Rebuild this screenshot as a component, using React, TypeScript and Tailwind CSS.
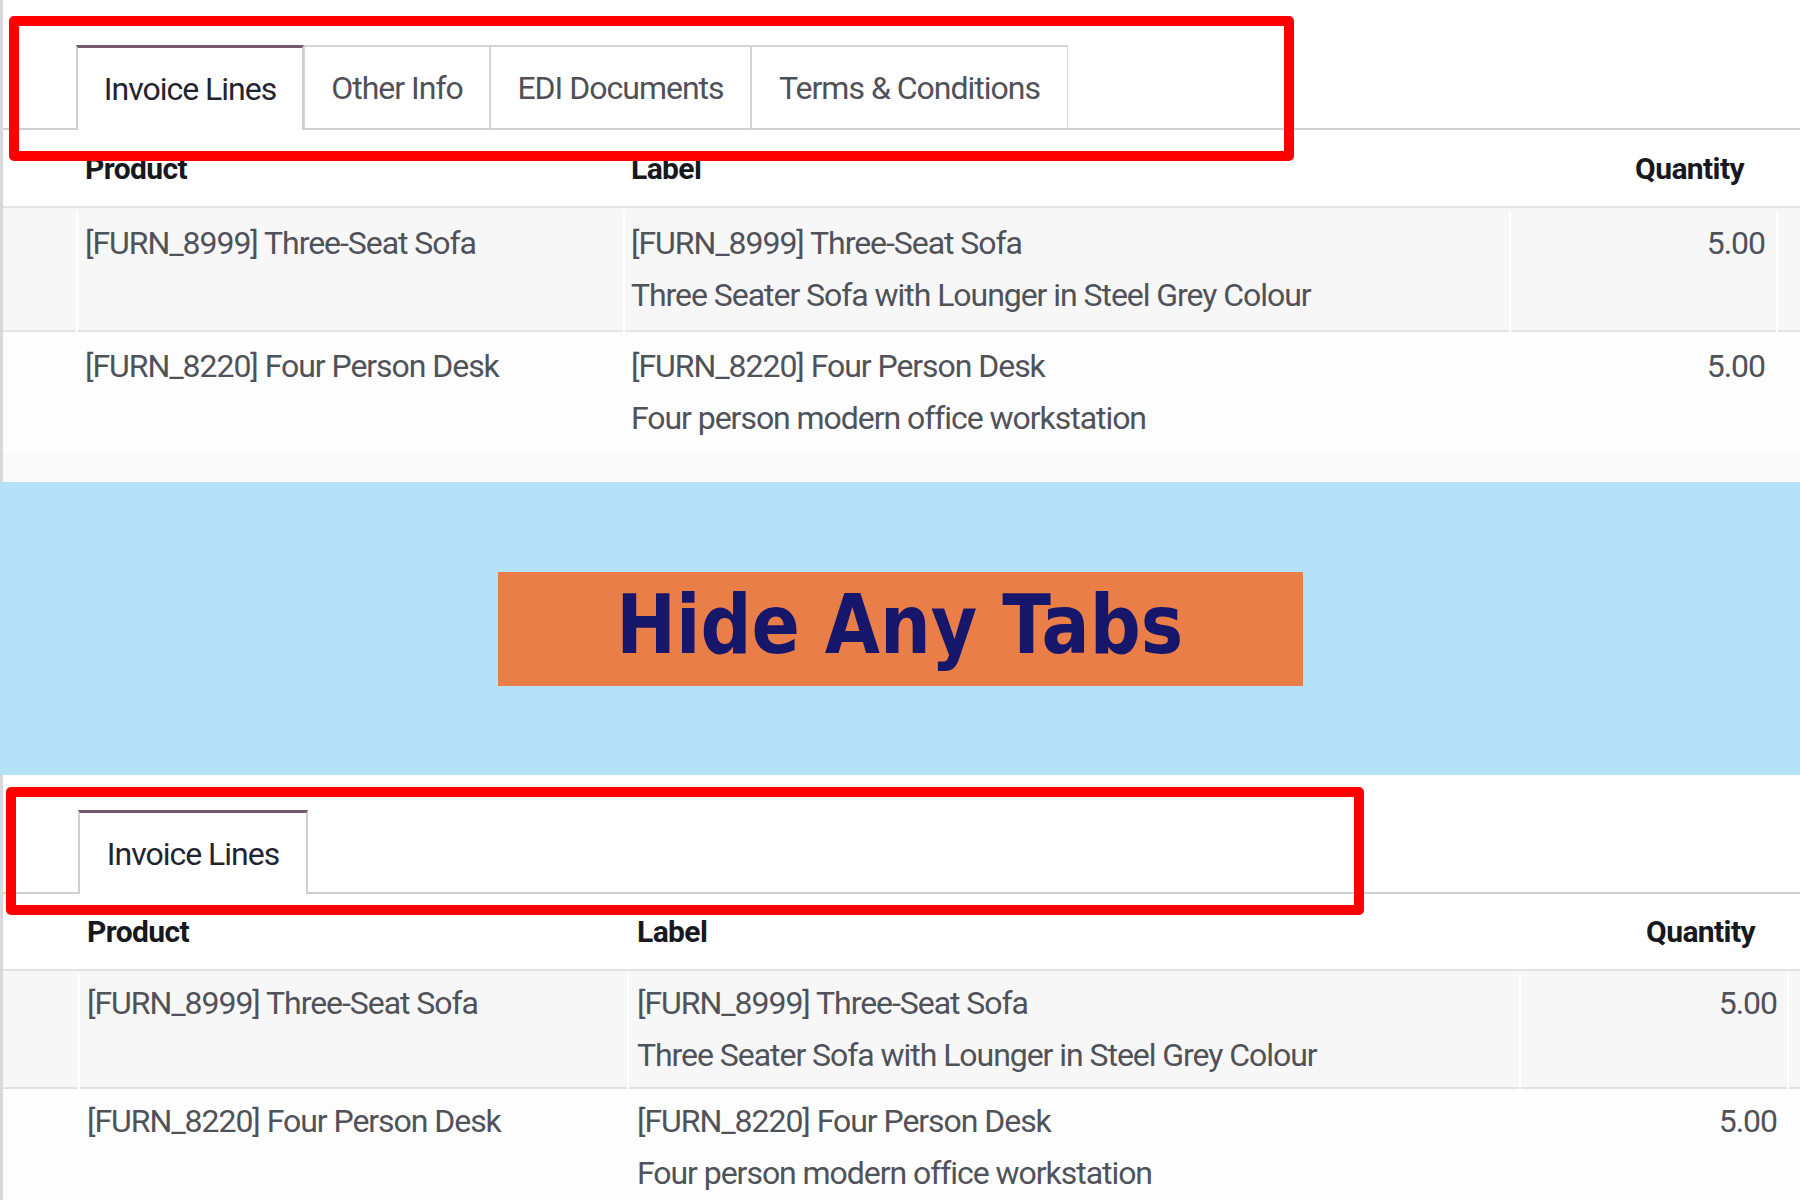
import React from "react";

type Tab = { label: string; width: string; active?: boolean };

type Line = {
  product: string;
  label: string;
  description: string;
  quantity: string;
};

const LINES: Line[] = [
  {
    product: "[FURN_8999] Three-Seat Sofa",
    label: "[FURN_8999] Three-Seat Sofa",
    description: "Three Seater Sofa with Lounger in Steel Grey Colour",
    quantity: "5.00",
  },
  {
    product: "[FURN_8220] Four Person Desk",
    label: "[FURN_8220] Four Person Desk",
    description: "Four person modern office workstation",
    quantity: "5.00",
  },
];

const ALL_TABS: Tab[] = [
  { label: "Invoice Lines", width: "w-[228px]", active: true },
  { label: "Other Info", width: "w-[186px]" },
  { label: "EDI Documents", width: "w-[261px]" },
  { label: "Terms & Conditions", width: "w-[317px]" },
];

const ONLY_TAB: Tab[] = [{ label: "Invoice Lines", width: "w-[230px]", active: true }];

const font = "font-['Roboto','Liberation_Sans',sans-serif]";

// tab header row of the form notebook
const TabStrip = ({ tabs, top, left, tabH }: { tabs: Tab[]; top: string; left: string; tabH: string }) => (
  <div className={`flex ${top} ${left} border-b-2 border-[#cfd0d4] bg-white`}>
    {tabs.map((tab) => (
      <div
        key={tab.label}
        className={`${tab.width} ${tabH} -mb-[2px] flex items-center justify-center text-[32px] tracking-[-1px] ${
          tab.active
            ? "bg-white border-x-2 border-t-[3px] border-x-[#cfd0d4] border-t-[#75586e] text-[#1f2430]"
            : "border-x border-t-2 border-[#d3d4d8] border-b-2 border-b-[#cfd0d4] text-[#4f5159]"
        }`}
      >
        {tab.label}
      </div>
    ))}
  </div>
);

type Cols = {
  grid: string;
  productPad: string;
  labelPad: string;
  qtyPad: string;
  headPad: string;
};

const LinesTable = ({
  cols,
  headH,
  rowHeights,
  rowPads,
}: {
  cols: Cols;
  headH: string;
  rowHeights: string[];
  rowPads: string[];
}) => (
  <div className="bg-white">
    {/* column headers */}
    <div
      className={`grid ${cols.grid} gap-x-[2px] ${headH} items-center border-b-2 border-[#e4e4e7] shadow-[0_2px_3px_rgba(0,0,0,0.05)] text-[30px] font-bold tracking-[-0.6px] text-[#17191f]`}
    >
      <div />
      <div className={cols.productPad}>Product</div>
      <div className={cols.labelPad}>Label</div>
      <div className={`${cols.headPad} text-right`}>Quantity</div>
      <div />
    </div>

    {LINES.map((line, i) => {
      const bg = i === 0 ? "bg-[#f7f7f8]" : "bg-[#fdfdfd]";
      const cell = `${bg} ${rowHeights[i]} ${i === 0 ? "border-b-2 border-[#e3e4e7]" : ""}`;
      return (
        <div
          key={line.product}
          className={`grid ${cols.grid} gap-x-[2px] text-[32px] leading-[40px] tracking-[-1.05px] text-[#50525a]`}
        >
          <div className={cell} />
          <div className={`${cell} ${rowPads[i]} ${cols.productPad}`}>{line.product}</div>
          <div className={`${cell} ${rowPads[i]} ${cols.labelPad}`}>
            <div>{line.label}</div>
            <div className="mt-[12px]">{line.description}</div>
          </div>
          <div className={`${cell} ${rowPads[i]} ${cols.qtyPad} text-right`}>{line.quantity}</div>
          <div className={cell} />
        </div>
      );
    })}
  </div>
);

const RedBox = ({ pos }: { pos: string }) => (
  <div className={`absolute ${pos} border-[10px] border-[#ff0000] rounded-[5px] pointer-events-none`} />
);

export default function App() {
  return (
    <div className={`w-[1800px] h-[1200px] overflow-hidden bg-white ${font}`}>
      {/* before: every tab visible */}
      <section className="relative h-[482px] border-l-[3px] border-[#d9d9dd] bg-[#f9f9f9]">
        <TabStrip tabs={ALL_TABS} top="pt-[45px]" left="pl-[73px]" tabH="h-[85px]" />
        <LinesTable
          cols={{
            grid: "grid-cols-[73px_545px_884px_265px_1fr]",
            productPad: "pl-[7px]",
            labelPad: "pl-[6px]",
            qtyPad: "pr-[11px]",
            headPad: "pr-[32px]",
          }}
          headH="h-[78px]"
          rowHeights={["h-[124px]", "h-[121px]"]}
          rowPads={["pt-[15px]", "pt-[14px]"]}
        />
        <RedBox pos="left-[6px] top-[16px] w-[1285px] h-[145px]" />
      </section>

      {/* banner */}
      <div className="h-[293px] bg-[#b5e2f8] flex items-center justify-center">
        <div className="w-[805px] h-[114px] bg-[#ea7e48] flex items-center justify-center pb-[8px]">
          <span className="inline-block scale-x-[0.87] font-['DejaVu_Sans',sans-serif] font-bold text-[82px] leading-none text-[#16176a] whitespace-nowrap">
            Hide Any Tabs
          </span>
        </div>
      </div>

      {/* after: only Invoice Lines left */}
      <section className="relative h-[425px] border-l-[3px] border-[#d9d9dd] bg-white">
        <TabStrip tabs={ONLY_TAB} top="pt-[35px]" left="pl-[75px]" tabH="h-[84px]" />
        <LinesTable
          cols={{
            grid: "grid-cols-[75px_547px_890px_266px_1fr]",
            productPad: "pl-[7px]",
            labelPad: "pl-[8px]",
            qtyPad: "pr-[10px]",
            headPad: "pr-[32px]",
          }}
          headH="h-[77px]"
          rowHeights={["h-[118px]", "h-[118px]"]}
          rowPads={["pt-[12px]", "pt-[12px]"]}
        />
        <RedBox pos="left-[3px] top-[12px] w-[1358px] h-[128px]" />
      </section>
    </div>
  );
}
